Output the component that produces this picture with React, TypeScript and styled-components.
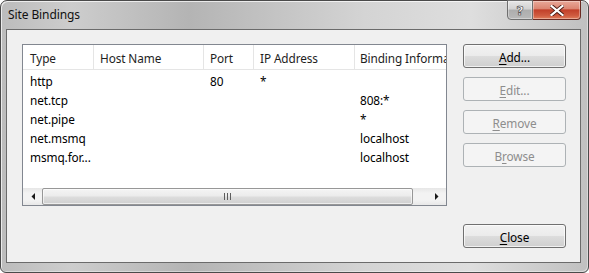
import React from 'react';
import styled, { createGlobalStyle } from 'styled-components';

const GlobalStyle = createGlobalStyle`
    html, body {
        margin: 0;
        padding: 0;
        background: #ffffff;
    }
    body {
        font-family: "Noto Sans", "Open Sans", sans-serif;
        font-size: 11.8px;
        letter-spacing: -0.1px;
    }
`;

const Window = styled.div`
    box-sizing: border-box;
    width: 589px;
    height: 273px;
    display: flex;
    flex-direction: column;
    padding: 0 7px 9px 5px;
    border: 1px solid #4a4a4a;
    border-radius: 7px 7px 6px 6px;
    background: linear-gradient(to right, #bcbcbc 0%, #cdcdcd 12%, #b4b4b4 32%, #d4d4d4 62%, #dedede 80%, #c0c0c0 100%);
    box-shadow: inset 1px 1px 0 rgba(255,255,255,0.7), inset -1px -1px 0 rgba(255,255,255,0.4);
`;

const TitleBar = styled.div`
    height: 28px;
    display: flex;
    align-items: flex-start;
    flex-shrink: 0;
`;

const Title = styled.div`
    padding-left: 2px;
    line-height: 28px;
    color: #111;
    font-size: 12px;
`;

const CaptionButtons = styled.div`
    margin-left: auto;
    display: flex;
    margin-top: -1px;
`;

const CaptionButton = styled.div<{ $close?: boolean }>`
    box-sizing: border-box;
    width: ${p => p.$close ? '48px' : '26px'};
    height: 20px;
    display: flex;
    align-items: center;
    justify-content: center;
    border: 1px solid ${p => p.$close ? '#6a2a22' : '#6f6f6f'};
    border-left-width: ${p => p.$close ? '0' : '1px'};
    border-radius: ${p => p.$close ? '0 0 4px 0' : '0 0 0 4px'};
    background: ${p => p.$close
        ? 'linear-gradient(to bottom, #e9a899 0%, #dc8673 42%, #c2402a 50%, #cf5a3f 80%, #e07e5c 100%)'
        : 'linear-gradient(to bottom, #e6e6e6 0%, #d2d2d2 45%, #adadad 50%, #b9b9b9 100%)'};
    box-shadow: inset 0 0 0 1px rgba(255,255,255,0.35);
`;

const HelpGlyph = styled.span`
    font-family: "DejaVu Sans", sans-serif;
    font-weight: bold;
    font-size: 13px;
    line-height: 1;
    color: #fff;
    -webkit-text-stroke: 0.6px #3a3a3a;
    margin-top: 1px;
`;

const Client = styled.div`
    flex: 1;
    display: flex;
    gap: 16px;
    padding: 14px 14px 14px 15px;
    background: #f0f0f0;
    border: 1px solid #6b6b6b;
`;

const ListBox = styled.div`
    box-sizing: border-box;
    width: 427px;
    height: 162px;
    display: flex;
    flex-direction: column;
    border: 1px solid #828790;
    background: #fff;
    overflow: hidden;
`;

const Columns = styled.div`
    display: grid;
    grid-template-columns: 71px 110px 50px 101px 130px;
`;

const HeaderRow = styled(Columns)`
    height: 24px;
    border-bottom: 1px solid #e5e5e5;
`;

const HeaderCell = styled.div<{ $pad?: number }>`
    padding: 2px 0 0 ${p => p.$pad ?? 6}px;
    line-height: 22px;
    color: #1e1e1e;
    white-space: nowrap;
    overflow: hidden;
    border-right: 1px solid #e5e5e5;
`;

const Rows = styled.div`
    flex: 1;
    padding-top: 2px;
`;

const Row = styled(Columns)`
    height: 19px;
`;

const Cell = styled.div<{ $pad?: number }>`
    padding-left: ${p => p.$pad ?? 6}px;
    line-height: 19px;
    color: #000;
    white-space: nowrap;
    overflow: hidden;
`;

const ScrollBar = styled.div`
    height: 17px;
    display: flex;
    flex-shrink: 0;
    background: linear-gradient(to bottom, #e6e6e6, #f3f3f3 30%, #f3f3f3 70%, #e8e8e8);
`;

const ArrowButton = styled.div`
    width: 19px;
    display: flex;
    align-items: center;
    justify-content: center;
`;

const Track = styled.div`
    flex: 1;
    display: flex;
    padding-right: 14px;
`;

const Thumb = styled.div`
    box-sizing: border-box;
    flex: 1;
    display: flex;
    align-items: center;
    justify-content: center;
    border: 1px solid #979797;
    border-radius: 2px;
    background: linear-gradient(to bottom, #f4f4f4 0%, #ececec 45%, #dcdcdc 55%, #d0d0d0 100%);
    box-shadow: inset 0 0 0 1px rgba(255,255,255,0.6);
`;

const ButtonColumn = styled.div`
    display: flex;
    flex-direction: column;
    gap: 9px;
`;

const Spacer = styled.div`
    flex: 1;
`;

const Button = styled.div<{ $disabled?: boolean }>`
    box-sizing: border-box;
    width: 103px;
    height: 24px;
    display: flex;
    align-items: center;
    justify-content: center;
    padding-top: 1px;
    border: 1px solid ${p => p.$disabled ? '#adb2b5' : '#707070'};
    border-radius: 3px;
    color: ${p => p.$disabled ? '#8d8d8d' : '#000'};
    background: ${p => p.$disabled
        ? '#f4f4f4'
        : 'linear-gradient(to bottom, #f2f2f2 0%, #ebebeb 50%, #dddddd 50%, #cfcfcf 100%)'};
    box-shadow: ${p => p.$disabled ? 'none' : 'inset 0 0 0 1px rgba(255,255,255,0.7)'};
`;

const Key = styled.span`
    text-decoration: underline;
    text-underline-offset: 2px;
`;

const columns = [
    { label: 'Type', pad: 7 },
    { label: 'Host Name', pad: 6 },
    { label: 'Port', pad: 6 },
    { label: 'IP Address', pad: 6 },
    { label: 'Binding Information', pad: 5 },
];

const bindings = [
    ['http', '', '80', '*', ''],
    ['net.tcp', '', '', '', '808:*'],
    ['net.pipe', '', '', '', '*'],
    ['net.msmq', '', '', '', 'localhost'],
    ['msmq.for...', '', '', '', 'localhost'],
];

const Arrow = ({ dir }: { dir: 'left' | 'right' }) => (
    <svg width="4" height="7" viewBox="0 0 4 7">
        {dir == 'left'
            ? <polygon points="4,0 4,7 0.5,3.5" fill="#1a1a1a" />
            : <polygon points="0,0 0,7 3.5,3.5" fill="#1a1a1a" />}
    </svg>
);

const Grip = () => (
    <svg width="7" height="7" viewBox="0 0 7 7">
        <rect x="0" y="0" width="1" height="7" fill="#5e5e5e" />
        <rect x="3" y="0" width="1" height="7" fill="#5e5e5e" />
        <rect x="6" y="0" width="1" height="7" fill="#5e5e5e" />
    </svg>
);

const CloseGlyph = () => (
    <svg width="14" height="11" viewBox="0 0 14 11">
        <path d="M1.5 1 L12.5 10 M12.5 1 L1.5 10" stroke="#4a1a12" strokeWidth="4" strokeLinecap="square" />
        <path d="M1.5 1 L12.5 10 M12.5 1 L1.5 10" stroke="#ffffff" strokeWidth="2.2" strokeLinecap="square" />
    </svg>
);

const App = () => {
    return (
        <>
            <GlobalStyle />
            <Window>
                <TitleBar>
                    <Title>Site Bindings</Title>
                    <CaptionButtons>
                        <CaptionButton><HelpGlyph>?</HelpGlyph></CaptionButton>
                        <CaptionButton $close><CloseGlyph /></CaptionButton>
                    </CaptionButtons>
                </TitleBar>
                <Client>
                    <ListBox>
                        <HeaderRow>
                            {columns.map(c => <HeaderCell key={c.label} $pad={c.pad}>{c.label}</HeaderCell>)}
                        </HeaderRow>
                        <Rows>
                            {bindings.map((row, i) => (
                                <Row key={i}>
                                    {row.map((v, j) => <Cell key={j} $pad={columns[j].pad}>{v}</Cell>)}
                                </Row>
                            ))}
                        </Rows>
                        <ScrollBar>
                            <ArrowButton><Arrow dir="left" /></ArrowButton>
                            <Track>
                                <Thumb><Grip /></Thumb>
                            </Track>
                            <ArrowButton><Arrow dir="right" /></ArrowButton>
                        </ScrollBar>
                    </ListBox>
                    <ButtonColumn>
                        <Button><span><Key>A</Key>dd...</span></Button>
                        <Button $disabled><span><Key>E</Key>dit...</span></Button>
                        <Button $disabled><span><Key>R</Key>emove</span></Button>
                        <Button $disabled><span>B<Key>r</Key>owse</span></Button>
                        <Spacer />
                        <Button><span><Key>C</Key>lose</span></Button>
                    </ButtonColumn>
                </Client>
            </Window>
        </>
    );
};

export default App;
